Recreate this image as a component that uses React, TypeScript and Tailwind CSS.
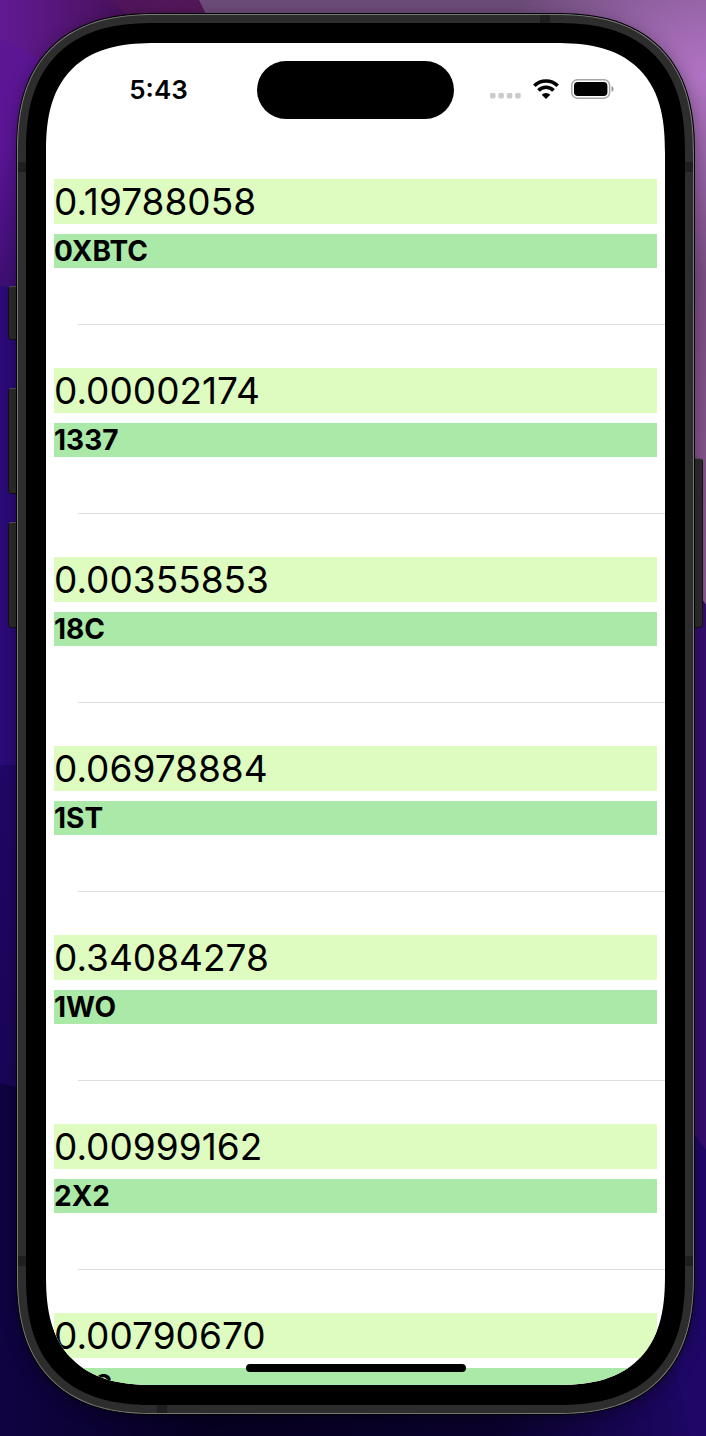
const coins = [
  { price: "0.19788058", symbol: "0XBTC" },
  { price: "0.00002174", symbol: "1337" },
  { price: "0.00355853", symbol: "18C" },
  { price: "0.06978884", symbol: "1ST" },
  { price: "0.34084278", symbol: "1WO" },
  { price: "0.00999162", symbol: "2X2" },
  { price: "0.00790670", symbol: "AC3" },
];

function Wallpaper() {
  return (
    <svg
      className="absolute inset-0 h-full w-full"
      viewBox="0 0 706 1436"
      preserveAspectRatio="none"
      aria-hidden="true"
    >
      <defs>
        <linearGradient id="left" x1="0" y1="0" x2="0" y2="1">
          <stop offset="0" stopColor="#5c1792" />
          <stop offset="0.5" stopColor="#5b1596" />
          <stop offset="1" stopColor="#3d0f72" />
        </linearGradient>
        <linearGradient id="corner" x1="0" y1="0" x2="1" y2="0">
          <stop offset="0" stopColor="#621a94" />
          <stop offset="0.75" stopColor="#4a1260" />
          <stop offset="1" stopColor="#4a1260" />
        </linearGradient>
        <linearGradient id="plum" x1="0" y1="0" x2="1" y2="0">
          <stop offset="0" stopColor="#51155c" />
          <stop offset="1" stopColor="#531858" />
        </linearGradient>
        <linearGradient id="right" x1="0" y1="0" x2="0" y2="1">
          <stop offset="0" stopColor="#6b4b78" />
          <stop offset="0.5" stopColor="#7d4e86" />
          <stop offset="1" stopColor="#8c5892" />
        </linearGradient>
        <radialGradient id="glow" gradientUnits="userSpaceOnUse" cx="706" cy="75" r="200">
          <stop offset="0" stopColor="#b173c4" />
          <stop offset="1" stopColor="#b173c4" stopOpacity="0" />
        </radialGradient>
        <linearGradient id="low" x1="0" y1="0" x2="0" y2="1">
          <stop offset="0" stopColor="#210768" />
          <stop offset="1" stopColor="#1a0556" />
        </linearGradient>
        <linearGradient id="base" x1="0" y1="0" x2="1" y2="0">
          <stop offset="0" stopColor="#0f0342" />
          <stop offset="0.3" stopColor="#070122" />
          <stop offset="0.7" stopColor="#0a022c" />
          <stop offset="1" stopColor="#1f0768" />
        </linearGradient>
      </defs>
      <rect width="706" height="1436" fill="url(#base)" />
      <rect width="353" height="290" fill="url(#left)" />
      <path d="M0 0H130L150 60L60 70L0 38Z" fill="url(#corner)" />
      <path d="M112 0H200L215 30H142Z" fill="url(#plum)" />
      <path d="M0 286L100 300V770L0 765Z" fill="#2b0b78" />
      <path d="M0 765H100V1110L0 1083Z" fill="url(#low)" />
      <path d="M199 0H706V605L660 540L500 300L214 30Z" fill="url(#right)" />
      <path d="M500 0H706V300H500Z" fill="url(#glow)" />
      <path d="M660 540L706 605V1150L660 1100Z" fill="#350c70" />
      <path d="M660 1090L706 1150V1436H690L660 1300Z" fill="#1f0768" />
    </svg>
  );
}

function StatusBar() {
  return (
    <header className="grid grid-cols-[1fr_197px_1fr] items-center pt-[18px]">
      <time className="pl-3.5 text-center text-[26px] leading-8 font-semibold">5:43</time>
      <div className="h-[58px] rounded-full bg-black" />
      <div className="flex items-center justify-center gap-3 pr-4 pb-0.5">
        <svg className="h-5 w-8" viewBox="0 0 32 20" fill="#cbcbcb" aria-hidden="true">
          <rect x="1" y="14" width="5.500" height="5.500" rx="1.400" />
          <rect x="9.400" y="14" width="5.500" height="5.500" rx="1.400" />
          <rect x="17.800" y="14" width="5.500" height="5.500" rx="1.400" />
          <rect x="26.200" y="14" width="5.500" height="5.500" rx="1.400" />
        </svg>
        <svg className="h-5 w-[26px]" viewBox="0 0 26 20" aria-label="Wi-Fi" role="img">
          <g fill="none" stroke="#000" strokeWidth="3.6">
            <path d="M1.300 6.800A16.800 16.800 0 0 1 24.700 6.800" />
            <path d="M5.500 11.400A10.500 10.500 0 0 1 20.500 11.400" />
          </g>
          <path d="M13 20L8.700 15.700A6 6 0 0 1 17.300 15.700Z" />
        </svg>
        <svg className="h-5 w-[43px]" viewBox="0 0 43 20" aria-label="Battery" role="img">
          <rect x="0.800" y="0.800" width="37.800" height="18.400" rx="5.500" fill="none" stroke="#a6a6a6" strokeWidth="1.500" />
          <rect x="3" y="3" width="33.400" height="14" rx="3.800" />
          <path d="M40.500 7Q42.700 8 42.700 10T40.500 13Z" fill="#999" />
        </svg>
      </div>
    </header>
  );
}

function CoinRow({ price, symbol }: { price: string; symbol: string }) {
  return (
    <li className="pt-[43px]">
      <div className="mb-14 flex flex-col gap-[10px] px-2">
        <p className="bg-[#dffcc0] pt-px text-[37px] leading-[44px]">{price}</p>
        <h2 className="bg-[#abe9a8] text-[28px] leading-[34px] font-bold">{symbol}</h2>
      </div>
      <div className="ml-8 h-px bg-[#dddddf]" />
    </li>
  );
}

function SideButton({ className }: { className: string }) {
  return (
    <div className={`absolute w-[9px] border border-black/60 border-t-[#555] bg-[#2d2d2d] ${className}`} />
  );
}

export default function App() {
  return (
    <main className="relative flex h-screen overflow-hidden bg-[#12043f] pt-[13px] pr-[11px] pb-[21px] pl-4 font-['Inter',sans-serif] text-black">
      <Wallpaper />
      <div className="relative flex min-w-0 flex-1">
        <SideButton className="top-[273px] -left-2 h-[54px] rounded-l-sm" />
        <SideButton className="top-[375px] -left-2 h-[106px] rounded-l-sm" />
        <SideButton className="top-[509px] -left-2 h-[106px] rounded-l-sm" />
        <SideButton className="top-[445px] -right-2 h-[170px] rounded-r-sm" />
        <div className="relative flex min-w-0 flex-1 rounded-[140px] border border-black bg-[#777] p-px shadow-[0_4px_16px_rgba(0,0,0,0.35)] [corner-shape:superellipse(1.3)]">
          <div className="relative flex min-w-0 flex-1 overflow-hidden rounded-[138px] bg-[#2d2d2d] p-2 [corner-shape:superellipse(1.3)]">
            <div className="absolute top-[147px] left-0 h-[10px] w-full bg-[#1f1f1f]" />
            <div className="absolute bottom-[147px] left-0 h-[10px] w-full bg-[#1f1f1f]" />
            <div className="absolute top-0 right-[143px] h-2 w-[10px] bg-[#1f1f1f]" />
            <div className="absolute bottom-0 left-[139px] h-2 w-[10px] bg-[#1f1f1f]" />
            <div className="relative flex min-w-0 flex-1 rounded-[130px] bg-black p-5 [corner-shape:superellipse(1.33)]">
              <div className="relative min-w-0 flex-1 overflow-hidden rounded-[110px] bg-white [corner-shape:superellipse(1.36)]">
                <StatusBar />
                <ul className="pt-[17px]">
                  {coins.map((coin) => (
                    <CoinRow key={coin.symbol} price={coin.price} symbol={coin.symbol} />
                  ))}
                </ul>
                <div className="absolute bottom-[13px] left-1/2 h-2 w-[220px] -translate-x-1/2 rounded-full bg-black" />
              </div>
            </div>
          </div>
        </div>
      </div>
    </main>
  );
}
